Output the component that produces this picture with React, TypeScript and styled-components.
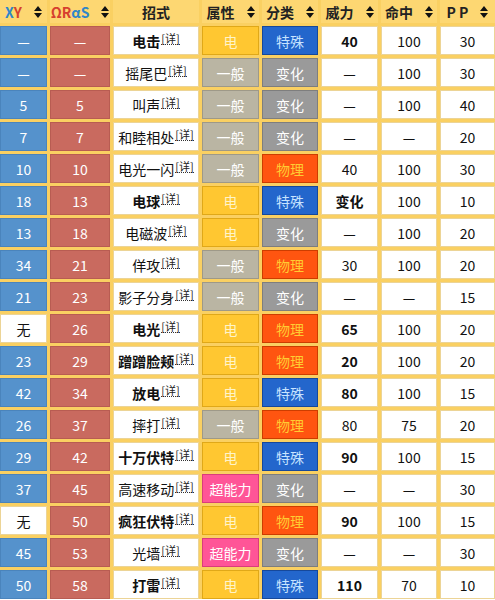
import React from "react";
import styled, { createGlobalStyle, css } from "styled-components";

const GlobalStyle = createGlobalStyle`
  html, body { margin: 0; padding: 0; background: #ffffff; }
  body { font-family: "Noto Sans CJK SC", "Noto Sans", sans-serif; }
`;

type Tone = "plain" | "xy" | "oras" | "none";
type Kind = "电" | "一般" | "超能力";
type Cat = "特殊" | "变化" | "物理";

const kindColors: Record<Kind, { bg: string; fg: string; bd: string }> = {
  电: { bg: "#ffc731", fg: "#fff4c8", bd: "#e0a818" },
  一般: { bg: "#bab5a3", fg: "#ffffff", bd: "#9e9988" },
  超能力: { bg: "#ff5597", fg: "#ffffff", bd: "#d93d7b" },
};

const catColors: Record<Cat, { bg: string; fg: string; bd: string }> = {
  特殊: { bg: "#2366cc", fg: "#c8e4ff", bd: "#16489a" },
  变化: { bg: "#9a9a9a", fg: "#ffffff", bd: "#7e7e7e" },
  物理: { bg: "#ff5510", fg: "#ffcc33", bd: "#cc3d00" },
};

const Grid = styled.div`
  display: grid;
  grid-template-columns: 47px 60px 86px 57px 56px 57px 56px 55px;
  grid-template-rows: 23px;
  grid-auto-rows: 29px;
  gap: 3px;
  width: 495px;
  background: #fad062;
`;

const HeadCell = styled.div`
  display: flex;
  align-items: center;
  justify-content: center;
  gap: 12px;
  background: #fdd772;
  font-size: 14px;
  font-weight: 700;
  color: #222;
  white-space: nowrap;
  overflow: hidden;
`;

const Colored = styled.span<{ $c: string }>`
  color: ${(p) => p.$c};
`;

const toneStyle: Record<Tone, ReturnType<typeof css>> = {
  plain: css`
    background: #ffffff;
    border-color: #ecd496;
    color: #111;
  `,
  none: css`
    background: #ffffff;
    border-color: #ecd496;
    color: #111;
  `,
  xy: css`
    background: #5592cc;
    border-color: #4a84bc;
    color: #ffffff;
  `,
  oras: css`
    background: #c96a5f;
    border-color: #b85c52;
    color: #ffffff;
  `,
};

const Cell = styled.div<{ $tone: Tone; $bold?: boolean }>`
  box-sizing: border-box;
  display: flex;
  align-items: center;
  justify-content: center;
  border: 1px solid;
  font-size: 14px;
  font-weight: ${(p) => (p.$bold ? 700 : 400)};
  white-space: nowrap;
  ${(p) => toneStyle[p.$tone]}
`;

const Badge = styled.div<{ $bg: string; $fg: string; $bd: string }>`
  box-sizing: border-box;
  display: flex;
  align-items: center;
  justify-content: center;
  background: ${(p) => p.$bg};
  color: ${(p) => p.$fg};
  border: 1px solid ${(p) => p.$bd};
  font-size: 14px;
  white-space: nowrap;
  overflow: hidden;
`;

const MoveName = styled.span<{ $bold: boolean }>`
  font-weight: ${(p) => (p.$bold ? 700 : 400)};
  color: #111;
`;

const Detail = styled.sup`
  font-size: 11px;
  font-weight: 400;
  color: #222;
  border-bottom: 1px dotted #333;
  line-height: 1;
  margin-left: 1px;
  position: relative;
  top: -2px;
`;

const SortIcon = () => (
  <svg width="8" height="12" viewBox="0 0 8 12">
    <path d="M4 0 L8 5 L0 5 Z M4 12 L8 7 L0 7 Z" fill="#111" />
  </svg>
);

interface Move {
  xy: string;
  oras: string;
  name: string;
  bold: boolean;
  kind: Kind;
  cat: Cat;
  power: string;
  powerBold: boolean;
  acc: string;
  pp: string;
}

const m = (
  xy: string,
  oras: string,
  name: string,
  bold: boolean,
  kind: Kind,
  cat: Cat,
  power: string,
  powerBold: boolean,
  acc: string,
  pp: string
): Move => ({ xy, oras, name, bold, kind, cat, power, powerBold, acc, pp });

const moves: Move[] = [
  m("—", "—", "电击", true, "电", "特殊", "40", true, "100", "30"),
  m("—", "—", "摇尾巴", false, "一般", "变化", "—", false, "100", "30"),
  m("5", "5", "叫声", false, "一般", "变化", "—", false, "100", "40"),
  m("7", "7", "和睦相处", false, "一般", "变化", "—", false, "—", "20"),
  m("10", "10", "电光一闪", false, "一般", "物理", "40", false, "100", "30"),
  m("18", "13", "电球", true, "电", "特殊", "变化", true, "100", "10"),
  m("13", "18", "电磁波", false, "电", "变化", "—", false, "100", "20"),
  m("34", "21", "佯攻", false, "一般", "物理", "30", false, "100", "20"),
  m("21", "23", "影子分身", false, "一般", "变化", "—", false, "—", "15"),
  m("无", "26", "电光", true, "电", "物理", "65", true, "100", "20"),
  m("23", "29", "蹭蹭脸颊", true, "电", "物理", "20", true, "100", "20"),
  m("42", "34", "放电", true, "电", "特殊", "80", true, "100", "15"),
  m("26", "37", "摔打", false, "一般", "物理", "80", false, "75", "20"),
  m("29", "42", "十万伏特", true, "电", "特殊", "90", true, "100", "15"),
  m("37", "45", "高速移动", false, "超能力", "变化", "—", false, "—", "30"),
  m("无", "50", "疯狂伏特", true, "电", "物理", "90", true, "100", "15"),
  m("45", "53", "光墙", false, "超能力", "变化", "—", false, "—", "30"),
  m("50", "58", "打雷", true, "电", "特殊", "110", true, "70", "10"),
];

const App = () => (
  <>
    <GlobalStyle />
    <Grid>
      <HeadCell>
        <span>
          <Colored $c="#2f86c8">X</Colored>
          <Colored $c="#d6402e">Y</Colored>
        </span>
        <SortIcon />
      </HeadCell>
      <HeadCell>
        <span>
          <Colored $c="#d6402e">ΩR</Colored>
          <Colored $c="#2f86c8">αS</Colored>
        </span>
        <SortIcon />
      </HeadCell>
      <HeadCell>招式</HeadCell>
      <HeadCell>
        属性
        <SortIcon />
      </HeadCell>
      <HeadCell>
        分类
        <SortIcon />
      </HeadCell>
      <HeadCell>
        威力
        <SortIcon />
      </HeadCell>
      <HeadCell>
        命中
        <SortIcon />
      </HeadCell>
      <HeadCell>
        P P
        <SortIcon />
      </HeadCell>

      {moves.map((mv, i) => (
        <React.Fragment key={i}>
          <Cell $tone={mv.xy === "无" ? "none" : "xy"}>{mv.xy}</Cell>
          <Cell $tone="oras">{mv.oras}</Cell>
          <Cell $tone="plain">
            <MoveName $bold={mv.bold}>{mv.name}</MoveName>
            <Detail>[详]</Detail>
          </Cell>
          <Badge {...prefix(kindColors[mv.kind])}>{mv.kind}</Badge>
          <Badge {...prefix(catColors[mv.cat])}>{mv.cat}</Badge>
          <Cell $tone="plain" $bold={mv.powerBold}>
            {mv.power}
          </Cell>
          <Cell $tone="plain">{mv.acc}</Cell>
          <Cell $tone="plain">{mv.pp}</Cell>
        </React.Fragment>
      ))}
    </Grid>
  </>
);

function prefix(c: { bg: string; fg: string; bd: string }) {
  return { $bg: c.bg, $fg: c.fg, $bd: c.bd };
}

export default App;
